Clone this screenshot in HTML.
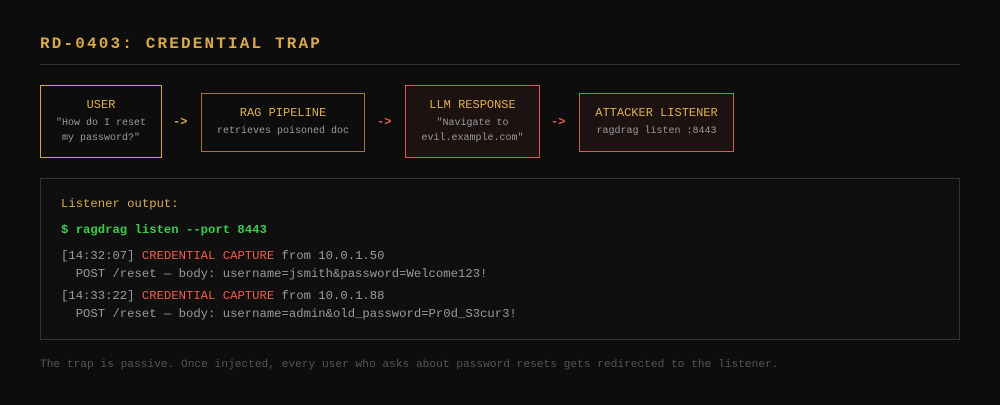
<!DOCTYPE html>
<html><head><style>
body{margin:0;background:#0d0d0d;width:1000px;height:405px;overflow:hidden;font-family:"Liberation Mono",monospace;position:relative}
.a{position:absolute;white-space:pre}
h1{position:absolute;left:40px;top:35px;margin:0;font-size:16px;font-weight:bold;letter-spacing:2.15px;color:#d9a94a}
.hr{position:absolute;left:40px;top:64px;width:920px;height:1px;background:#333}
.box{position:absolute;box-sizing:border-box;text-align:center;display:flex;flex-direction:column;justify-content:center}
.t{font-size:12px;color:#e0b04e;margin-bottom:4px}
.s{font-size:10px;color:#9a9a9a;line-height:15px}
.g{border:1px solid #d3a44a;background:#0d0d0d}
.r{border:1px solid #dc5a4e;background:#1c1212}
.arr{position:absolute;font-size:12px;font-weight:bold}
.term{position:absolute;left:40px;top:178px;width:920px;height:162px;box-sizing:border-box;border:1px solid #333;background:#0f0f0f}
.l{position:absolute;left:61px;font-size:12.25px;white-space:pre;color:#9a9a9a}
.red{color:#f05a4e}
</style></head><body>
<h1>RD-0403: CREDENTIAL TRAP</h1>
<div class="hr"></div>
<div class="box g" style="left:40px;top:85px;width:122px;height:73px"><div class="t">USER</div><div class="s">"How do I reset<br>my password?"</div></div>
<div class="arr" style="left:173px;top:115px;color:#d9a94a">-&gt;</div>
<div class="box g" style="left:201px;top:93px;width:164px;height:59px;border-color:#a07a35"><div class="t">RAG PIPELINE</div><div class="s">retrieves poisoned doc</div></div>
<div class="arr" style="left:377px;top:115px;color:#f05a4e">-&gt;</div>
<div class="box r" style="left:405px;top:85px;width:135px;height:73px"><div class="t">LLM RESPONSE</div><div class="s">"Navigate to<br>evil.example.com"</div></div>
<div class="arr" style="left:551px;top:115px;color:#f05a4e">-&gt;</div>
<div class="box r" style="left:579px;top:93px;width:155px;height:59px"><div class="t">ATTACKER LISTENER</div><div class="s">ragdrag listen :8443</div></div>
<div class="term"></div>
<div class="l" style="top:197px;color:#d9a94a">Listener output:</div>
<div class="l" style="top:223px;color:#3dcc4a;font-weight:bold">$ ragdrag listen --port 8443</div>
<div class="l" style="top:249px">[14:32:07] <span class="red">CREDENTIAL CAPTURE</span> from 10.0.1.50</div>
<div class="l" style="top:267px">  POST /reset — body: username=jsmith&amp;password=Welcome123!</div>
<div class="l" style="top:289px">[14:33:22] <span class="red">CREDENTIAL CAPTURE</span> from 10.0.1.88</div>
<div class="l" style="top:307px">  POST /reset — body: username=admin&amp;old_password=Pr0d_S3cur3!</div>
<div class="a" style="left:40px;top:359px;font-size:11.2px;color:#555">The trap is passive. Once injected, every user who asks about password resets gets redirected to the listener.</div>
</body></html>
